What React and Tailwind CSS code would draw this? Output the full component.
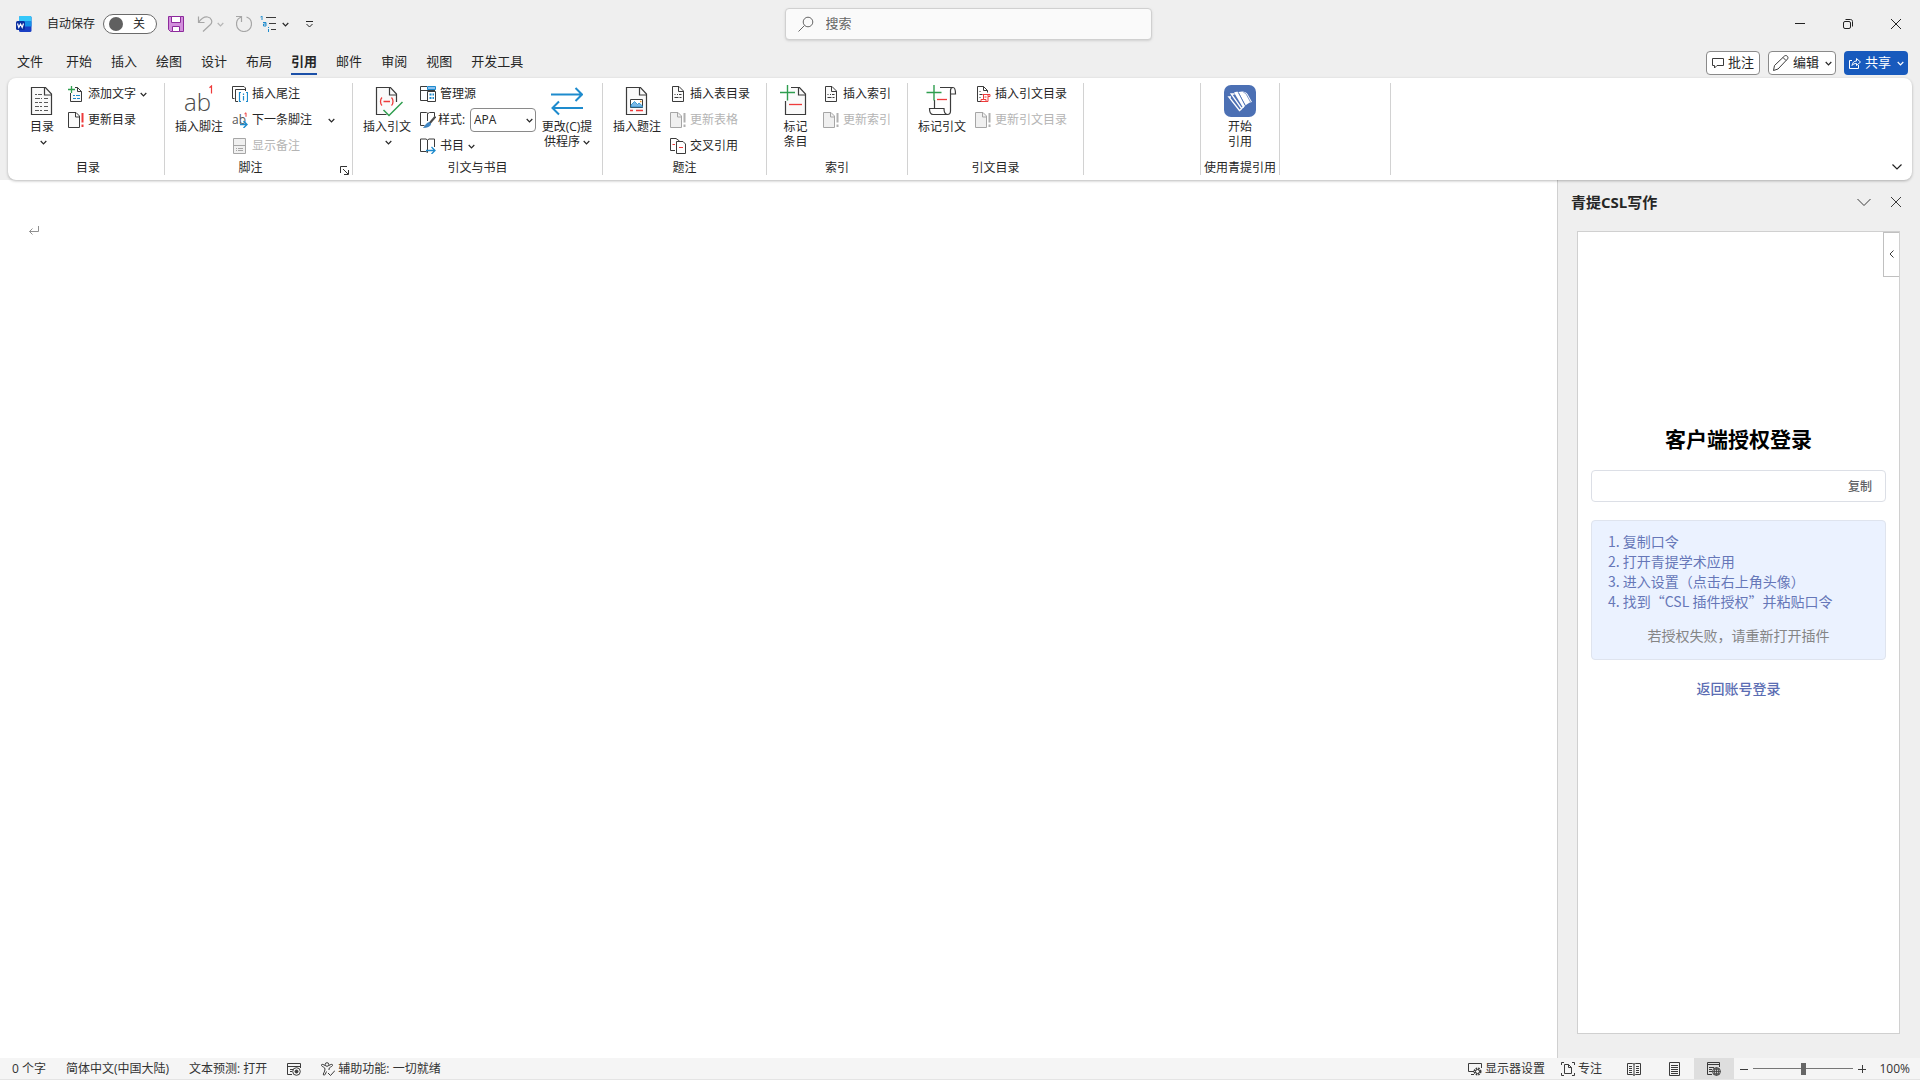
// src/App.jsx
import { useState } from 'react';

const INK = '#3b3b3b';
const BLUE = '#1e8bcd';
const RED = '#ee3a3a';
const GREEN = '#2f9e4f';
const GREY = '#a6a6a6';

// Shared wrapper: every icon is drawn on its own pixel grid
function Icon({ w = 16, h = 16, children }) {
    return (
        <svg width={w} height={h} viewBox={`0 0 ${w} ${h}`} fill="none" stroke={INK} className="shrink-0" aria-hidden="true">
            {children}
        </svg>
    );
}

function Chevron({ color = '#262626' }) {
    return (
        <svg width="7" height="5" viewBox="0 0 7 5" fill="none" stroke={color} strokeWidth="1.2" className="inline-block shrink-0" aria-hidden="true">
            <path d="M.7 1 3.5 3.8 6.3 1" />
        </svg>
    );
}

/* ---------- large ribbon icons (32 x 32) ---------- */

function BigDoc() {
    return (
        <>
            <path d="M5.5 2.5h14l6 6.5v20.5h-20z" fill="#fafafa" strokeWidth="1.2" />
            <path d="M18.5 2.5v7.5h7" strokeWidth="1.2" />
        </>
    );
}

function TocIcon() {
    return (
        <Icon w={32} h={32}>
            <BigDoc />
            <path d="M9 9.5h2M12 9.5h4M9 13.5h5M15 13.5h1M18 13.5h4M9 17.5h3M13 17.5h3M18 17.5h4M9 21.5h4M14 21.5h2M18 21.5h4M9 25.5h4M14 25.5h2M18 25.5h4" stroke="#5a5a5a" />
        </Icon>
    );
}

function FootnoteIcon() {
    return (
        <svg width="32" height="32" viewBox="0 0 32 32" aria-hidden="true">
            <text x="1" y="26" fontSize="24" fontFamily="Open Sans, sans-serif" fontWeight="300" fill="#4a4a4a">ab</text>
            <path d="M26.5 2.8 28.5 1v7.5" fill="none" stroke={RED} strokeWidth="1.2" />
        </svg>
    );
}

function CitationIcon() {
    return (
        <Icon w={32} h={32}>
            <path d="M25.5 17V9l-6-6.5h-14v27h10" fill="#fafafa" strokeWidth="1.2" />
            <path d="M18.5 2.5V10h7" strokeWidth="1.2" />
            <path d="M11 12.5c-2 2-2 6 0 8M20.5 12.5c2 2 2 6 0 8M12.500 16.500h6.500" stroke={RED} strokeWidth="1.3" />
            <path d="m12.500 25 5.500 5.500L31.500 17" stroke={GREEN} strokeWidth="1.5" />
        </Icon>
    );
}

function SwapIcon() {
    return (
        <Icon w={32} h={32}>
            <path d="M0 9.500h31M24.500 3l6.500 6.500-6.500 6.500M32 23H1.500M8 16.500 1.500 23 8 29.500" stroke={BLUE} strokeWidth="2" />
        </Icon>
    );
}

function CaptionIcon() {
    return (
        <Icon w={32} h={32}>
            <BigDoc />
            <path d="M9.500 14.500h12v8h-12z" fill="#fff" />
            <path d="m10 20 3.500-3.500 3 3 1.500-1.500 3.500 3V22H10z" fill="#7ab8e6" stroke={BLUE} strokeWidth=".8" />
            <path d="M19 16.500h1.500" stroke="#f0a030" strokeWidth="1.5" />
            <path d="M9 25.500h3M15 25.500h7" stroke={RED} strokeWidth="1.3" />
        </Icon>
    );
}

function MarkEntryIcon() {
    return (
        <Icon w={32} h={32}>
            <path d="M5.500 16v13.500h20V9l-6-6.500H11" fill="#fafafa" strokeWidth="1.2" />
            <path d="M18.500 2.500V10h7" strokeWidth="1.2" />
            <path d="M9 19.500h13" stroke={RED} strokeWidth="1.3" />
            <path d="M7.500 0v15.500M0 7.500h15" stroke={GREEN} strokeWidth="1.4" />
        </Icon>
    );
}

function MarkCitationIcon() {
    return (
        <Icon w={32} h={32}>
            <path d="M14 2.500h13c2 0 2.500 1.500 2.500 6.500h-5V26c0 2-1 3.500-3 3.500H7c-2 0-3.500-1.500-3.500-6H18c0 4 1 6 3.500 6M8.500 15v8.500M27 2.500c-1.500 0-2.500 1-2.500 3V9" strokeWidth="1.2" />
            <path d="M11 14.500h10" stroke={RED} strokeWidth="1.3" />
            <path d="M8 0v15.500M.5 7.500h15" stroke={GREEN} strokeWidth="1.4" />
        </Icon>
    );
}

function QingtiIcon() {
    return (
        <Icon w={32} h={32}>
            <rect width="32" height="32" rx="7" fill="#4c70b4" stroke="none" />
            <path d="M14.500 7c4-1.200 7.500-.5 9 2l4.500 8c-3 .5-5 2-6.500 3.500z" fill="#fff" stroke="none" />
            <path d="M10 7.500c1.500-.7 3-.9 4.200-.5l7 14-2.200 1.800z" fill="#fff" stroke="none" />
            <path d="M19.500 7.500c1.500.3 2.300 1 3 2.200l4 7.300" stroke="#4c70b4" strokeWidth=".7" />
            <path d="m14.300 7.500 7 13" stroke="#4c70b4" strokeWidth=".9" />
            <path d="M10.500 9H7.200l10.300 14.500 2.200-1.800M7 12H4.800l10.700 13.500 2-1.500" stroke="#fff" strokeWidth="1.300" />
        </Icon>
    );
}

/* ---------- small ribbon icons (16 x 16) ---------- */

function AddTextIcon() {
    return (
        <Icon>
            <path d="M2.500 7v8.500h11v-10l-4-4H7M9.500 1.500v4h4" fill="#fafafa" />
            <path d="M5 9.500h2M8 9.500h4M5 12.500h3M9 12.500h3" stroke={BLUE} />
            <path d="M3.500 0v7M0 3.500h7" stroke={GREEN} strokeWidth="1.3" />
        </Icon>
    );
}

function UpdateIcon({ off = false }) {
    return (
        <Icon>
            <path d="M.5.5H8L11.500 4v11.500H.5z" fill={off ? '#f0f0f0' : '#fafafa'} stroke={off ? GREY : INK} />
            <path d="M7.500.5V5h4" stroke={off ? GREY : INK} />
            <path d="M14.500 1v9.500M14.500 12.500v2.500" stroke={off ? '#b0b0b0' : RED} strokeWidth="2" />
        </Icon>
    );
}

function EndnoteIcon() {
    return (
        <Icon>
            <path d="M2.500 12.500h-2V.5H12l1.500 1.500v3" />
            <path d="M6 15.500H3.500v-12H14" />
            <path d="M9 6.500H7.500v9H9M14 6.500h1.500v9H14M11.500 10v4.500M11.500 7.500V9" stroke={BLUE} strokeWidth="1.2" />
        </Icon>
    );
}

function NextFootnoteIcon() {
    return (
        <svg width="16" height="16" viewBox="0 0 16 16" fill="none" className="shrink-0" aria-hidden="true">
            <text x="0" y="12" fontSize="12" fontFamily="Open Sans, sans-serif" fill="#555">ab</text>
            <path d="m12.500 1.800 1.500-1v4" stroke={RED} />
            <path d="M8 12.500h7M11.500 9l3.500 3.500-3.500 3.500" stroke={BLUE} strokeWidth="1.4" />
        </svg>
    );
}

function ShowNotesIcon() {
    return (
        <Icon>
            <path d="M1.500.5h12v15h-12z" fill="#f0f0f0" stroke={GREY} />
            <path d="M1.500 7.500h12M4 10.500h1M6 10.500h5M4 12.500h1M6 12.500h5" stroke={GREY} />
        </Icon>
    );
}

function SourcesIcon() {
    return (
        <Icon>
            <path d="M7 .5H.5v14H7M.5 4.500H15" />
            <path d="M7.500.5h8v3h-8z" fill="#8cc0ee" stroke={BLUE} />
            <path d="M7.500 5.500h8v10h-8z" fill="#fff" />
            <path d="M9.500 8.500h2M12.500 8.500h1.500M9.500 12h2M12.500 12h1.500" stroke={BLUE} strokeWidth="2" />
        </Icon>
    );
}

function StyleIcon() {
    return (
        <Icon>
            <path d="M8 1.500 6.500.5h-6v13h4M7.500 1.500V9M8 1.500 9.500.5h5V4" />
            <path d="m15.500 4.500-6 7" stroke="#4a4a4a" strokeWidth="2.2" />
            <path d="M9.500 10.500c1.500.5 1.500 2.500 0 3.500s-4 1.500-6 1.500c2-1 2-4.500 6-5z" fill="#3f86c4" stroke="#2e75b6" strokeWidth=".6" />
        </Icon>
    );
}

function BibliographyIcon() {
    return (
        <Icon>
            <path d="M7.500 2v12.500l-1.500-1H.5V1H6zM7.500 2 9 1h5.500v8" />
            <path d="M6 12.500h9M11.500 9l3.500 3.500-3.500 3.500" stroke={BLUE} strokeWidth="1.3" />
        </Icon>
    );
}

function TableDocIcon() {
    return (
        <Icon>
            <path d="M2.500.5H9l4.500 4.500v10.500h-11z" fill="#fafafa" />
            <path d="M8.500.5v5h5M4.500 8.500h1M7 8.500h1M9 8.500h2.500M4.500 11.500h4M9.500 11.500h2" />
        </Icon>
    );
}

function CrossRefIcon() {
    return (
        <Icon>
            <path d="M5 12.500H.5V.5H6L9.500 3" />
            <path d="M6.500 3.500H13l2.500 2.500v9.500h-9z" fill="#fff" />
            <path d="M2.500 6.500H5M9 9.500h4" stroke={RED} strokeWidth="1.2" />
        </Icon>
    );
}

function AuthoritiesIcon() {
    return (
        <Icon>
            <path d="M6 15.500H2.500V.5h6l4 4v2M8.500.5v4h4M4.500 5.500h1M4.500 8.500h3M4.500 11.500h1" />
            <path d="M7.500 8.500h7.500v2h-2v5H6v-2h2.500v-5M9.500 11h2M13 8.500v2M8.500 13.500H11v2" stroke={RED} />
        </Icon>
    );
}

/* ---------- ribbon building blocks ---------- */

function BigButton({ icon, children, className = 'w-14' }) {
    return (
        <button type="button" className={`flex shrink-0 flex-col items-center gap-0.5 pt-0.5 text-center leading-[15px] whitespace-nowrap ${className}`}>
            {icon}
            <span>{children}</span>
        </button>
    );
}

function SmallButton({ icon, children, disabled = false, arrow = false }) {
    return (
        <button type="button" disabled={disabled} className="flex h-[22px] items-center gap-1 px-1 whitespace-nowrap disabled:text-[#b4b4b4]">
            {icon}
            {children}
            {arrow && <Chevron />}
        </button>
    );
}

function Group({ label, children, className }) {
    return (
        <section className={`flex h-[92px] shrink-0 flex-col border-r border-[#d2d2d2] ${className}`}>
            <div className="flex flex-1 px-1.5">{children}</div>
            <h2 className="h-[15px] text-center leading-4 whitespace-nowrap">{label}</h2>
        </section>
    );
}

function Column({ children }) {
    return <div className="flex flex-col items-start gap-1 pl-px">{children}</div>;
}

function TitleBar() {
    const [autoSave, setAutoSave] = useState(false);

    return (
        <header className="grid h-12 grid-cols-[1fr_367px_1fr] items-center pl-4">
            <div className="flex items-center">
                <Icon>
                    <g stroke="none">
                        <rect x="3" width="12.500" height="16" rx="1.500" fill="#1a3fc4" />
                        <path d="M3 5.500V1.500C3 .7 3.700 0 4.500 0H14c.8 0 1.500.7 1.500 1.500v4z" fill="#35c8fa" />
                        <path d="M3 5.500h12.500v5H3z" fill="#1490e8" />
                        <rect y="5" width="9" height="9" rx="1.500" fill="#0b2fa0" />
                    </g>
                    <path d="m1.500 7.500 1.300 4L4.500 8l1.700 3.500 1.300-4" stroke="#fff" strokeWidth="1.200" />
                </Icon>
                <label className="ml-[15px] flex items-center gap-2">
                    自动保存
                    <input type="checkbox" role="switch" className="peer sr-only" checked={autoSave} onChange={(e) => setAutoSave(e.target.checked)} />
                    <span className="flex h-5 w-[54px] items-center gap-2.5 rounded-full border border-[#6a6a6a] bg-white pl-[5px]">
                        <span className="size-3.5 rounded-full bg-[#606060]" />
                        {autoSave ? '开' : '关'}
                    </span>
                </label>
                <button type="button" aria-label="保存" className="ml-[11px]">
                    <Icon>
                        <path d="M.5.5h15v15h-13l-2-2z" fill="#d28fdc" stroke="#8d2a9c" />
                        <path d="M3.500.5h9v6h-9zM4.500 10.500h7v5h-7z" fill="#fff" stroke="#8d2a9c" />
                    </Icon>
                </button>
                <button type="button" aria-label="撤消" className="ml-[13px] flex items-center gap-1">
                    <Icon>
                        <path d="M1.500.5v6h6M1.500 6.500C4 3 7 .5 10.500 1c4 .5 5.500 5 3 7.500L6 15.500" stroke={GREY} strokeWidth="1.200" />
                    </Icon>
                    <Chevron color="#b5b5b5" />
                </button>
                <button type="button" aria-label="重复" className="ml-3">
                    <Icon>
                        <path d="M0 .5h5.500V6M5.500 1C2.500 2 .5 4.800.5 8c0 4.200 3.300 7.500 7.500 7.500s7.500-3.300 7.500-7.500c0-3.200-2-6-5-7" stroke={GREY} strokeWidth="1.200" />
                    </Icon>
                </button>
                <button type="button" aria-label="多级列表" className="ml-2 flex items-center gap-1.5">
                    <Icon>
                        <path d="M6 1.500h10M9 7.500h7M8 13.500h1M11 13.500h5" />
                        <path d="M.5 1 2 0v4M3 6.500h3V10H3.500V8H6M8.500 11v1M8.500 13v3" stroke={BLUE} />
                    </Icon>
                    <Chevron />
                </button>
                <button type="button" aria-label="自定义快速访问工具栏" className="ml-[17px]">
                    <Icon w={7} h={7}>
                        <path d="M0 .5h7M.5 3l3 3 3-3" stroke="#262626" />
                    </Icon>
                </button>
            </div>
            <label className="flex h-8 items-center gap-3 rounded border border-[#d0d0d0] bg-[#fafafa] px-3 shadow-sm">
                <Icon>
                    <circle cx="10" cy="6" r="4.800" stroke="#666" />
                    <path d="M6.500 9.500.5 15.500" stroke="#666" />
                </Icon>
                <input type="search" placeholder="搜索" aria-label="搜索" className="min-w-0 flex-1 bg-transparent text-[13px] outline-none placeholder:text-[#666]" />
            </label>
            <div className="flex h-full justify-end">
                <button type="button" aria-label="最小化" className="flex w-12 items-center justify-center">
                    <Icon w={10} h={10}><path d="M0 4.500h10" stroke="#222" /></Icon>
                </button>
                <button type="button" aria-label="还原" className="flex w-12 items-center justify-center">
                    <Icon w={10} h={10}>
                        <path d="M2.500.5h5c1.200 0 2 .8 2 2v5" stroke="#222" />
                        <rect x=".5" y="2.500" width="7" height="7" rx="1.500" stroke="#222" />
                    </Icon>
                </button>
                <button type="button" aria-label="关闭" className="flex w-12 items-center justify-center">
                    <Icon w={10} h={10}><path d="m0 0 10 10M10 0 0 10" stroke="#222" /></Icon>
                </button>
            </div>
        </header>
    );
}

const tabs = ['开始', '插入', '绘图', '设计', '布局', '引用', '邮件', '审阅', '视图', '开发工具'];

function TabBar() {
    const [active, setActive] = useState('引用');

    return (
        <div className="flex h-[30px] items-start justify-between pr-3 pl-[17px] text-[13px]">
            <nav className="flex gap-[19px]">
                <button type="button" className="mr-1 h-[27px] border-b-2 border-transparent pt-[3px]">文件</button>
                {tabs.map((tab) => (
                    <button
                        key={tab}
                        type="button"
                        onClick={() => setActive(tab)}
                        className={
                            tab === active
                                ? 'h-[27px] border-b-2 border-[#1b50a8] pt-[3px] font-bold'
                                : 'h-[27px] border-b-2 border-transparent pt-[3px]'
                        }
                    >
                        {tab}
                    </button>
                ))}
            </nav>
            <div className="flex gap-2 pt-[3px]">
                <button type="button" className="flex h-6 w-[54px] items-center justify-center gap-1 rounded border border-[#8a8a8a] bg-white">
                    <Icon w={12} h={12}>
                        <path d="M.5 1.500h11v7H5l-2.500 2.500V8.500h-2z" />
                    </Icon>
                    批注
                </button>
                <button type="button" className="flex h-6 w-[68px] items-center gap-1 rounded border border-[#8a8a8a] bg-white pl-1">
                    <Icon>
                        <path d="m.5 15.500 1-5L11.500 1c2-1.500 4.500 1 3 3L5 14zM10 2.500 13 5.500" />
                    </Icon>
                    编辑
                    <span className="ml-0.5 flex"><Chevron /></span>
                </button>
                <button type="button" className="flex h-6 w-16 items-center gap-1 rounded bg-[#185abd] pl-[5px] text-white">
                    <Icon w={12} h={12}>
                        <path d="M3 3.500H.5v8h9V8" stroke="#fff" />
                        <path d="M3 8.500c.5-3 2-4.500 4.500-4.500V1.500L11.500 5l-4 3.500V6.500C5.500 6.500 4 7 3 8.500z" stroke="#fff" />
                    </Icon>
                    共享
                    <span className="ml-0.5 flex"><Chevron color="#fff" /></span>
                </button>
            </div>
        </div>
    );
}

function Ribbon() {
    return (
        <div className="relative z-10 mx-2 flex rounded-lg bg-white py-[5px] shadow-[0_1px_3px_rgba(0,0,0,0.28)]">
            <Group label={<span className="pl-1">目录</span>} className="w-[157px]">
                <BigButton icon={<TocIcon />} className="ml-2 w-10">目录<br /><span className="pl-1"><Chevron /></span></BigButton>
                <div className="pl-px">
                    <Column>
                        <SmallButton icon={<AddTextIcon />} arrow>添加文字</SmallButton>
                        <SmallButton icon={<UpdateIcon />}>更新目录</SmallButton>
                    </Column>
                </div>
            </Group>
            <Group label={
                <span className="flex items-center">
                    <span className="flex-1 pr-1">脚注</span>
                    <button type="button" aria-label="脚注和尾注" className="pt-1 pr-[3px]">
                        <Icon w={9} h={9}><path d="M.5 7V.5H7M3 3l5 5M8.500 4v4.500H4" stroke="#333" /></Icon>
                    </button>
                </span>
            } className="w-[188px]">
                <BigButton icon={<FootnoteIcon />}>插入脚注</BigButton>
                <Column>
                    <SmallButton icon={<EndnoteIcon />}>插入尾注</SmallButton>
                    <div className="flex items-center gap-3">
                        <SmallButton icon={<NextFootnoteIcon />}>下一条脚注</SmallButton>
                        <button type="button" aria-label="更多脚注" className="flex"><Chevron /></button>
                    </div>
                    <SmallButton icon={<ShowNotesIcon />} disabled>显示备注</SmallButton>
                </Column>
            </Group>
            <Group label="引文与书目" className="w-[250px]">
                <BigButton icon={<CitationIcon />}>插入引文<br /><span className="pl-1"><Chevron /></span></BigButton>
                <Column>
                    <SmallButton icon={<SourcesIcon />}>管理源</SmallButton>
                    <div className="flex h-[22px] items-center gap-0.5 pl-1">
                        <StyleIcon />
                        <label htmlFor="cite-style" className="w-[30px] whitespace-nowrap">样式:</label>
                        <div className="grid items-center">
                            <select id="cite-style" defaultValue="APA" className="col-start-1 row-start-1 h-6 w-[66px] appearance-none rounded border border-[#8a8a8a] bg-white pl-[3px]">
                                <option>APA</option>
                                <option>MLA</option>
                                <option>Chicago</option>
                            </select>
                            <span className="pointer-events-none col-start-1 row-start-1 mr-[3px] flex justify-self-end"><Chevron /></span>
                        </div>
                    </div>
                    <SmallButton icon={<BibliographyIcon />} arrow>书目</SmallButton>
                </Column>
                <BigButton icon={<SwapIcon />} className="w-[62px]">更改(C)提<br />供程序 <Chevron /></BigButton>
            </Group>
            <Group label="题注" className="w-[164px]">
                <BigButton icon={<CaptionIcon />}>插入题注</BigButton>
                <Column>
                    <SmallButton icon={<TableDocIcon />}>插入表目录</SmallButton>
                    <SmallButton icon={<UpdateIcon off />} disabled>更新表格</SmallButton>
                    <SmallButton icon={<CrossRefIcon />}>交叉引用</SmallButton>
                </Column>
            </Group>
            <Group label="索引" className="w-[141px]">
                <BigButton icon={<MarkEntryIcon />} className="w-[45px]">标记<br />条目</BigButton>
                <Column>
                    <SmallButton icon={<TableDocIcon />}>插入索引</SmallButton>
                    <SmallButton icon={<UpdateIcon off />} disabled>更新索引</SmallButton>
                </Column>
            </Group>
            <Group label="引文目录" className="w-[176px]">
                <BigButton icon={<MarkCitationIcon />}>标记引文</BigButton>
                <Column>
                    <SmallButton icon={<AuthoritiesIcon />}>插入引文目录</SmallButton>
                    <SmallButton icon={<UpdateIcon off />} disabled>更新引文目录</SmallButton>
                </Column>
            </Group>
            <Group className="w-[117px]" />
            <Group label="使用青提引用" className="w-[79px]">
                <BigButton icon={<QingtiIcon />} className="mx-auto">开始<br />引用</BigButton>
            </Group>
            <Group className="w-[111px]" />
            <button type="button" aria-label="折叠功能区" className="mr-2.5 mb-[3px] ml-auto self-end">
                <Icon w={10} h={10}><path d="m.5 2.500 4.500 4.500 4.500-4.500" stroke="#222" strokeWidth="1.200" /></Icon>
            </button>
        </div>
    );
}

function LoginPane() {
    return (
        <aside className="flex w-[363px] shrink-0 flex-col border-l border-[#d0d0d0] bg-[#efefef] pr-5 pb-6 pl-[19px]">
            <div className="-mr-5 -ml-[19px] flex h-[51px] items-center pr-[19px] pb-[7px] pl-[13px]">
                <h2 className="flex-1 text-[15px] font-bold">青提CSL写作</h2>
                <button type="button" aria-label="任务窗格选项" className="mr-5">
                    <Icon w={14} h={10}><path d="m.5 2 6.500 6.500L13.500 2" /></Icon>
                </button>
                <button type="button" aria-label="关闭窗格">
                    <Icon w={10} h={10}><path d="m0 0 10 10M10 0 0 10" /></Icon>
                </button>
            </div>
            <div className="relative flex flex-1 flex-col border border-[#d0d0d0] bg-white px-[13px] pt-[190px] font-['Noto_Sans_CJK_SC',sans-serif]">
                <button type="button" aria-label="展开" className="absolute top-0 right-0 flex h-[45px] w-4 items-center justify-center border border-r-0 border-[#c0c0c0] bg-white pb-0.5">
                    <Icon w={5} h={8}><path d="M4.500.5 1 4l3.500 3.500" /></Icon>
                </button>
                <h1 className="text-center text-[21px] leading-8 font-bold text-black">客户端授权登录</h1>
                <div className="mt-4 flex h-8 items-center rounded border border-[#dcdfe6] pr-[13px]">
                    <input type="text" readOnly aria-label="口令" className="min-w-0 flex-1 px-3 outline-none" />
                    <button type="button" className="font-medium text-[#606266]">复制</button>
                </div>
                <div className="mt-[18px] rounded border border-[#dfe4ee] bg-[#ebf2ff] px-4 py-2.5 text-sm leading-5 text-[#6677b8]">
                    <ol>
                        <li>1. 复制口令</li>
                        <li>2. 打开青提学术应用</li>
                        <li>3. 进入设置（点击右上角头像）</li>
                        <li>4. 找到“CSL 插件授权”并粘贴口令</li>
                    </ol>
                    <p className="mt-3.5 mb-1 text-center text-[#858585]">若授权失败，请重新打开插件</p>
                </div>
                <a href="#login" className="mt-[18px] self-center text-sm font-medium text-[#5b6db3]">返回账号登录</a>
            </div>
        </aside>
    );
}

function StatusBar() {
    const [zoom, setZoom] = useState(100);

    return (
        <footer className="flex h-[22px] items-center justify-between border-b border-[#e4e4e4] bg-[#f5f5f5] pr-2.5 pl-3 whitespace-nowrap text-[#333]">
            <div className="flex items-center gap-5">
                <span>0 个字</span>
                <span>简体中文(中国大陆)</span>
                <span>文本预测: 打开</span>
                <button type="button" aria-label="宏录制">
                    <Icon w={14} h={14}>
                        <path d="M5 12.500H.5V1.500h13V6M.5 4.500h13M3 7.500h3M3 9.500h2" />
                        <circle cx="9.500" cy="9.500" r="3.800" fill="#f5f5f5" />
                        <circle cx="9.500" cy="9.500" r="1.500" fill={INK} />
                    </Icon>
                </button>
                <button type="button" className="flex items-center gap-[3px]">
                    <Icon w={14} h={14}>
                        <circle cx="6" cy="2.500" r="1.800" />
                        <path d="M4 3.500C2 2 0 2 .5 3.500S4 5 4 7c0 3-2.500 5-1.500 6s2-1 3-3.500M8 3.500c2-1.500 4-1.500 3.500 0S8 5 8 7v1M7 11l2.500 2.500L14 8.500" />
                    </Icon>
                    辅助功能: 一切就绪
                </button>
            </div>
            <div className="flex h-full items-center">
                <button type="button" className="flex items-center gap-[3px]">
                    <Icon w={14} h={14}>
                        <path d="M6 9.500H.5v-8h13V6M3 12.500h3" />
                        <circle cx="9.500" cy="9.500" r="3" strokeWidth="2" strokeDasharray="1.500 .9" />
                        <circle cx="9.500" cy="9.500" r="2" />
                    </Icon>
                    显示器设置
                </button>
                <button type="button" className="ml-4 flex items-center gap-[3px]">
                    <Icon w={14} h={14}>
                        <path d="M.5 3V.5H3M11 .5h2.500V3M.5 11v2.500H3M11 13.500h2.500V11" />
                        <path d="M3.500 2.500h4l3 3v6h-7zM7.500 2.500v3h3" />
                    </Icon>
                    专注
                </button>
                <button type="button" aria-label="阅读视图" className="ml-3 flex h-full w-10 items-center justify-center">
                    <Icon w={14} h={14}>
                        <path d="M7 2 5.500 1.500h-5v11h5L7 13.500l1.500-1h5v-11h-5zM7 2v11M2 4.500h3M2 6.500h3M2 8.500h3M2 10.500h3M9 4.500h3M9 6.500h3M9 8.500h3M9 10.500h3" />
                    </Icon>
                </button>
                <button type="button" aria-label="页面视图" className="flex h-full w-10 items-center justify-center">
                    <Icon w={11} h={14}>
                        <path d="M.5.5h10v13H.5zM2 3.500h7M2 5.500h7M2 7.500h7M2 9.500h7M2 11.500h7" />
                    </Icon>
                </button>
                <button type="button" aria-label="Web 版式视图" className="flex h-full w-10 items-center justify-center bg-[#dedede]">
                    <Icon w={14} h={14}>
                        <path d="M5 12.500H.5v-12h12V5M.5 2.500h12M2 5.500h5M2 7.500h3M2 9.500h3" />
                        <circle cx="9.500" cy="9.500" r="3.900" fill="#dedede" />
                        <path d="M5.500 9.500h8M9.500 5.500v8M7 7c1.500 1 3.500 1 5 0M7 12c1.500-1 3.500-1 5 0M8.500 6c-1.500 2-1.500 5 0 7M10.500 6c1.500 2 1.500 5 0 7" strokeWidth=".8" />
                    </Icon>
                </button>
                <button type="button" aria-label="缩小" onClick={() => setZoom(Math.max(10, zoom - 10))} className="ml-1.5">
                    <Icon w={8} h={8}><path d="M0 4.500h8" /></Icon>
                </button>
                <input
                    type="range"
                    min="10"
                    max="190"
                    value={zoom}
                    aria-label="显示比例"
                    onChange={(e) => setZoom(Number(e.target.value))}
                    className="mx-[5px] h-3 w-[100px] appearance-none bg-[linear-gradient(#777,#777)] bg-[length:100%_1px] bg-center bg-no-repeat [&::-webkit-slider-thumb]:h-3 [&::-webkit-slider-thumb]:w-[5px] [&::-webkit-slider-thumb]:appearance-none [&::-webkit-slider-thumb]:bg-[#666]"
                />
                <button type="button" aria-label="放大" onClick={() => setZoom(Math.min(190, zoom + 10))}>
                    <Icon w={8} h={8}><path d="M0 4.500h8M4.500 0v8" /></Icon>
                </button>
                <span className="w-11 text-right">{zoom}%</span>
            </div>
        </footer>
    );
}

function App() {
    return (
        <div className="flex min-h-screen flex-col bg-[#efefef] font-['Open_Sans','Noto_Sans_CJK_SC',sans-serif] text-xs text-[#262626]">
            <TitleBar />
            <TabBar />
            <Ribbon />
            <div className="flex flex-1">
                <main className="flex-1 bg-white px-7 pt-10">
                    <Icon w={12} h={20}>
                        <path d="M10.500 6v5.500h-9M4.500 8.500l-3 3 3 3" stroke="#909090" />
                    </Icon>
                </main>
                <LoginPane />
            </div>
            <StatusBar />
        </div>
    );
}

export default App;
